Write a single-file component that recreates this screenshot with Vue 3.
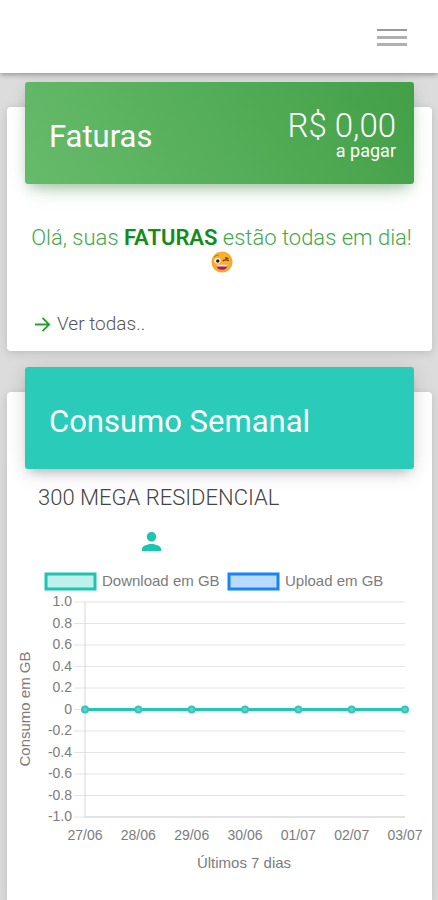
<script setup>
const days = ['27/06', '28/06', '29/06', '30/06', '01/07', '02/07', '03/07']
const ticks = ['1.0', '0.8', '0.6', '0.4', '0.2', '0', '-0.2', '-0.4', '-0.6', '-0.8', '-1.0']

const plot = { left: 78, right: 398, top: 37, bottom: 252 }
const stepX = (plot.right - plot.left) / (days.length - 1)
const stepY = (plot.bottom - plot.top) / (ticks.length - 1)
const zeroY = plot.top + 5 * stepY

const gridLines = ticks.map((label, i) => ({ label, y: plot.top + i * stepY }))
const points = days.map((label, i) => ({ label, x: plot.left + i * stepX }))
</script>

<template>
  <div class="page">
    <header class="topbar">
      <button class="menu" type="button" aria-label="Menu">
        <span class="bar"></span>
        <span class="bar"></span>
        <span class="bar"></span>
      </button>
    </header>

    <main class="content">
      <section class="card">
        <div class="banner banner-green">
          <h2>Faturas</h2>
          <div class="amount">
            <span class="value">R$ 0,00</span>
            <span class="caption">a pagar</span>
          </div>
        </div>
        <p class="message">
          Olá, suas <strong>FATURAS</strong> estão todas em dia!
          <svg class="emoji" viewBox="0 0 24 24" aria-hidden="true">
            <circle cx="12" cy="12" r="11.5" fill="#f9a825" />
            <circle cx="12" cy="11" r="9" fill="#fbb02c" />
            <ellipse cx="7" cy="10.5" rx="3.4" ry="3" fill="#fff" />
            <circle cx="7.4" cy="10.8" r="1.9" fill="#2b1a12" />
            <path d="M3.5 6.6 Q5.5 4.2 8.5 4.6" fill="none" stroke="#c07a1a" stroke-width="1.1" />
            <path d="M12.8 11 Q15.5 8.6 19.5 10.6 M15.5 7.4 L19 8.4" fill="none" stroke="#6b3a12" stroke-width="1.5" />
            <path d="M6 15.5 H18 Q17.5 20.5 12 20.5 Q6.5 20.5 6 15.5Z" fill="#a8186a" />
            <path d="M6 15 H18 L17.6 16.8 H6.4Z" fill="#fbe3ee" />
          </svg>
        </p>
        <a class="more" href="#faturas">
          <svg class="arrow" viewBox="0 0 18 18" aria-hidden="true">
            <path d="M1 9 H16 M9 2 L16 9 L9 16" fill="none" stroke="#2a9f2f" stroke-width="2" />
          </svg>
          Ver todas..
        </a>
      </section>

      <section class="card card-last">
        <div class="banner banner-teal">
          <h2>Consumo Semanal</h2>
        </div>
        <h3 class="plan">300 MEGA RESIDENCIAL</h3>
        <div class="user">
          <svg class="person" viewBox="4 4 16 16" aria-hidden="true">
            <path
              fill="#1dc4b0"
              d="M12 12c2.21 0 4-1.79 4-4s-1.79-4-4-4-4 1.79-4 4 1.79 4 4 4zm0 2c-2.67 0-8 1.34-8 4v2h16v-2c0-2.66-5.33-4-8-4z"
            />
          </svg>
        </div>

        <svg class="chart" viewBox="0 0 425 315" role="img" aria-label="Consumo em GB, últimos 7 dias">
          <rect class="key key-down" x="39" y="9" width="49" height="15" />
          <text class="title" x="95" y="21">Download em GB</text>
          <rect class="key key-up" x="222" y="9" width="49" height="15" />
          <text class="title" x="278" y="21">Upload em GB</text>

          <g v-for="line in gridLines" :key="line.label">
            <line class="grid" x1="67" :x2="plot.right" :y1="line.y" :y2="line.y" />
            <text x="65" :y="line.y + 4" text-anchor="end">{{ line.label }}</text>
          </g>
          <line class="grid axis" :x1="plot.left" :x2="plot.left" :y1="plot.top" :y2="plot.bottom" />
          <line class="grid axis" :x1="plot.left" :x2="plot.right" :y1="plot.bottom" :y2="plot.bottom" />

          <line class="series" :x1="plot.left" :x2="plot.right" :y1="zeroY" :y2="zeroY" />
          <g v-for="point in points" :key="point.label">
            <circle class="dot" :cx="point.x" :cy="zeroY" r="3" />
            <text :x="point.x" y="275" text-anchor="middle">{{ point.label }}</text>
          </g>

          <text class="title" x="237" y="303" text-anchor="middle">Últimos 7 dias</text>
          <text class="title" transform="translate(23 144) rotate(-90)" text-anchor="middle">Consumo em GB</text>
        </svg>
      </section>
    </main>
  </div>
</template>

<style>
body {
  background: #dcdcdc;
}
</style>

<style scoped>
.page {
  display: flex;
  flex-direction: column;
  min-height: 100vh;
  font-family: Roboto, "Liberation Sans", sans-serif;
  font-weight: 300;
  color: #3c4858;
}

.topbar {
  display: flex;
  align-items: center;
  justify-content: flex-end;
  height: 73px;
  padding: 0 31px;
  box-sizing: border-box;
  background: #fff;
  box-shadow: 0 1px 6px rgba(0, 0, 0, 0.4);
}

.menu {
  display: flex;
  flex-direction: column;
  gap: 5px;
  width: 30px;
  padding: 0;
  border: 0;
  background: none;
}

.bar {
  height: 2px;
  background: #999;
}

.bar + .bar {
  height: 3px;
  margin-bottom: -1px;
  background: #b0b0b0;
}

.content {
  display: flex;
  flex: 1;
  flex-direction: column;
  gap: 41px;
  padding: 34px 6px 0 7px;
}

.card {
  display: flex;
  flex-direction: column;
  background: #fff;
  border-radius: 4px;
  box-shadow: 0 2px 10px rgba(0, 0, 0, 0.14);
}

.card-last {
  flex: 1;
  border-radius: 4px 4px 0 0;
}

.banner {
  display: flex;
  align-items: center;
  justify-content: space-between;
  height: 102px;
  margin: -25px 18px 0;
  padding: 0 18px 0 24px;
  box-sizing: border-box;
  border-radius: 3px;
  color: #fff;
}

.banner-green {
  background: linear-gradient(60deg, #66bb6a, #43a047);
  box-shadow: 0 12px 20px -10px rgba(76, 175, 80, 0.4), 0 4px 20px rgba(0, 0, 0, 0.08), 0 6px 10px -4px rgba(0, 0, 0, 0.16);
}

.banner-teal {
  background: #2bcbba;
  box-shadow: 0 4px 20px rgba(0, 0, 0, 0.14), 0 7px 10px -5px rgba(0, 0, 0, 0.22);
}

h2 {
  margin: 8px 0 0;
  font-size: 31px;
  font-weight: 400;
  line-height: 40px;
}

.amount {
  display: flex;
  flex-direction: column;
  align-items: flex-end;
  padding-top: 4px;
}

.value {
  font-size: 33px;
  line-height: 32px;
}

.caption {
  font-size: 18px;
  font-weight: 400;
  line-height: 18px;
}

.message {
  margin: 41px 16px 0 20px;
  font-size: 22px;
  line-height: 26px;
  text-align: center;
  color: #45a64b;
}

.message strong {
  font-weight: 600;
  color: #128c1b;
}

.emoji {
  display: block;
  width: 22px;
  height: 22px;
  margin: 0 auto;
}

.more {
  display: flex;
  align-items: center;
  gap: 6px;
  margin: 39px 27px 15px;
  font-size: 19px;
  line-height: 24px;
  color: #555;
  text-decoration: none;
}

.arrow {
  width: 17px;
  height: 17px;
}

.plan {
  margin: 15px 31px 0;
  font-size: 22px;
  font-weight: 300;
  line-height: 28px;
  color: #444;
}

.user {
  display: flex;
  margin: 20px 135px 0;
}

.person {
  width: 19px;
  height: 19px;
}

.chart {
  display: block;
  width: 100%;
  margin-top: 14px;
}

.chart text {
  font-family: "Liberation Sans", Arial, sans-serif;
  font-size: 14px;
  font-weight: 400;
  fill: #7c7c7c;
}

.chart .title {
  font-size: 15px;
}

.grid {
  stroke: #e4e4e4;
  stroke-width: 1;
}

.axis {
  stroke: #d6d6d6;
}

.key {
  stroke-width: 3;
}

.key-down {
  fill: #bff0ea;
  stroke: #1dc4b0;
}

.key-up {
  fill: #b8dcff;
  stroke: #1684fb;
}

.series {
  stroke: #25c5b6;
  stroke-width: 3;
}

.dot {
  fill: #5fd2c9;
  stroke: #35c5ba;
  stroke-width: 2;
}
</style>
